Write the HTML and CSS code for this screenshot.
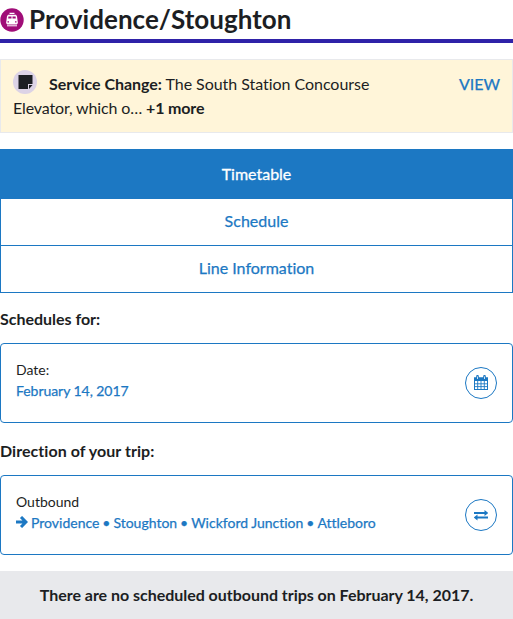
FILE: index.html
```html
<!DOCTYPE html>
<html lang="en">
<head>
<meta charset="utf-8">
<title>Providence/Stoughton</title>
<link rel="stylesheet" href="styles.css">
</head>
<body>
<header class="title">
  <svg class="train" viewBox="0 0 24 24">
    <circle cx="12" cy="12" r="11.700" fill="#a00d78"/>
    <path d="M9.500 4.800h5v1.300h-5zM8 6.800h8l1 1.500.9 6.700-1 1.500H7.100l-1-1.500L7 8.300z" fill="#fff"/>
    <path d="M8.400 8.500h3.100v2H8.200zM12.500 8.500h3.100l.2 2h-3.300zM7.500 13.200h1.500v1.200H7.500zM15 13.200h1.500v1.200H15z" fill="#a00d78"/>
    <path d="M7 17.800h10" stroke="#fff"/>
  </svg>
  <h1>Providence/Stoughton</h1>
</header>
<section class="alert">
  <svg class="note" viewBox="0 0 24 24">
    <circle cx="12" cy="12" r="12" fill="#dcd3e6"/>
    <path d="M5.500 5h14v9H15v5H5.500zM16 15h3.500L16 19z" fill="#1c1e23"/>
  </svg>
  <p><b>Service Change:</b> The South Station Concourse <span class="tight">Elevator, which o… <b>+1 more</b></span></p>
  <a>VIEW</a>
</section>
<nav class="tabs">
  <a class="tab active">Timetable</a>
  <a class="tab">Schedule</a>
  <a class="tab">Line Information</a>
</nav>
<h2>Schedules for:</h2>
<section class="card">
  <div class="info"><div>Date:</div><a class="date">February 14, 2017</a></div>
  <span class="round">
    <svg width="14" height="16" viewBox="0 0 14 16">
      <rect x=".5" y="3" width="13" height="11.500" fill="#fff" stroke="#1c78c3"/>
      <path d="M0 2.500h14V6H0z" fill="#1c78c3"/>
      <path d="M3.700 6v8.500M7 6v8.500M10.300 6v8.500M.5 8.800h13M.5 11.600h13" stroke="#1c78c3" stroke-width=".9"/>
      <path d="M3.500 1.200v2.600M10.500 1.200v2.600" stroke="#1c78c3" stroke-width="2.600" stroke-linecap="round"/>
      <path d="M3.500 1.500v2.500M10.500 1.500v2.500" stroke="#fff" stroke-width=".8"/>
    </svg>
  </span>
</section>
<h2 class="direction">Direction of your trip:</h2>
<section class="card">
  <div class="info">
    <div>Outbound</div>
    <a class="route"><svg class="arrow" viewBox="0 0 12 12"><path d="M0 6h10M5 1 10 6l-5 5" fill="none" stroke="#1c78c3" stroke-width="3"/></svg>Providence<i>•</i>Stoughton<i>•</i>Wickford Junction<i>•</i>Attleboro</a>
  </div>
  <span class="round">
    <svg width="14" height="14" viewBox="0 0 14 14">
      <path d="M0 5h11M3 9.500h11" stroke="#1c78c3" stroke-width="2"/>
      <path d="M10.500 2 14.200 5l-3.700 3zM3.500 6.500-.2 9.500l3.700 3z" fill="#1c78c3"/>
    </svg>
  </span>
</section>
<p class="empty">There are no scheduled outbound trips on February 14, 2017.</p>
</body>
</html>
```
FILE: styles.css
```css
*{box-sizing:border-box}
body{margin:0;font:16px/24px Lato,sans-serif;font-variant-ligatures:none;color:#1c1e23;background:#fff}
h1,h2,p{margin:0}
b,h1,h2{font-weight:700}
a{color:#1c78c3;-webkit-text-stroke:.25px currentColor}
.title{display:flex;align-items:center;height:43px;border-bottom:4px solid #2f22a8}
.train{width:24px;height:24px;margin-right:5px}
h1{font-size:26px;line-height:39px;letter-spacing:.03px}
.alert{display:flex;align-items:flex-start;margin-top:16px;height:74px;padding:12px;border:1px solid #e8e9ec;background:#fff5d9}
.alert p{width:368px;margin:0 auto 0 -24px;text-indent:36px;letter-spacing:-.04px}
.tight{letter-spacing:-.14px}
.note{flex:none;width:24px;height:24px;margin-top:-2px}
.tabs{margin-top:16px;border:1px solid #1c78c3;height:144px}
.tab{display:block;height:47px;line-height:46px;text-align:center;border-bottom:1px solid #1c78c3}
.active{height:48px;line-height:48px;background:#1c78c3;color:#fff;-webkit-text-stroke-width:.3px;box-shadow:0 1px #1c78c3}
.active + .tab{height:48px}
.tab:last-child{height:46px;line-height:44px;border-bottom:0}
h2{font-size:16px;line-height:24px;margin:14px 0 12px;letter-spacing:-.02px}
.direction{margin:16px 0 12px;letter-spacing:.05px}
.card{display:flex;justify-content:space-between;align-items:center;height:80px;border:1px solid #1c78c3;border-radius:4px;padding:0 15px;font-size:14px;line-height:21px}
.info{padding-bottom:7px}
.date{letter-spacing:-.05px}
.route{display:flex;align-items:center;white-space:pre}
.route i{width:14px;text-align:center;font-style:normal}
.arrow{width:12px;height:12px;margin-right:3px}
.round{display:flex;align-items:center;justify-content:center;width:32px;height:32px;border:1px solid #1c78c3;border-radius:50%}
.empty{margin-top:16px;height:48px;line-height:48px;text-align:center;background:#e8e9ec;font-weight:700;letter-spacing:-.03px}
```
